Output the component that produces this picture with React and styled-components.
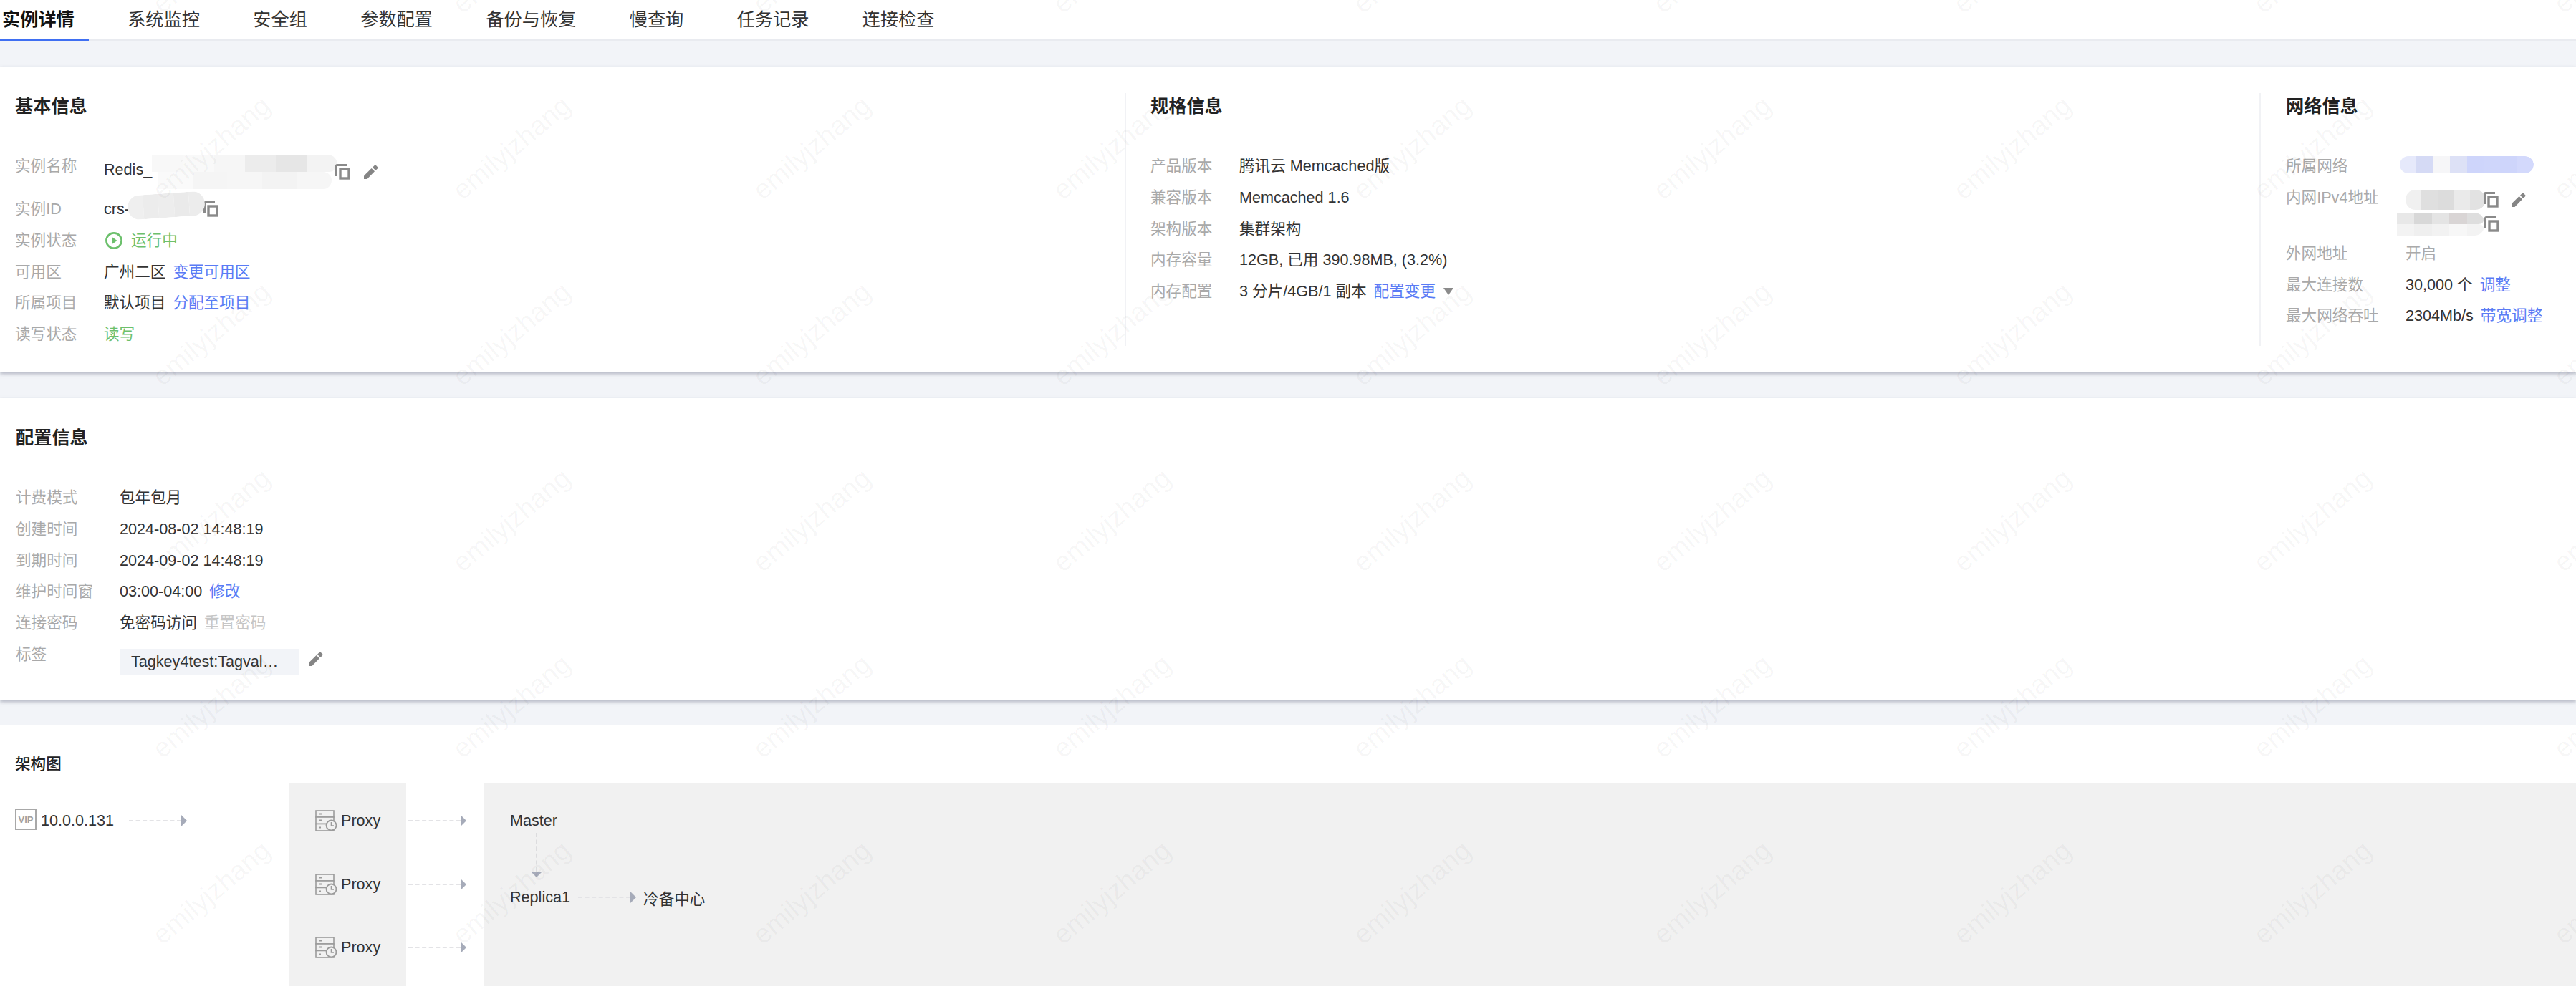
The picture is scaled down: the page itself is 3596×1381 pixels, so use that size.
import React from 'react'
import styled, { createGlobalStyle } from 'styled-components'

const GlobalStyle = createGlobalStyle`
  html, body {
    margin: 0;
    padding: 0;
    background: #f2f4f8;
  }
  body {
    font-family: "Liberation Sans", "Noto Sans CJK SC", sans-serif;
    font-size: 21.6px;
    color: #333;
  }
`

const Page = styled.div`
  position: relative;
  width: 3596px;
  height: 1381px;
  overflow: hidden;
  background: #f2f4f8;
`

const Watermark = styled.div`
  position: absolute;
  top: -184px;
  left: -333px;
  display: grid;
  grid-template-columns: repeat(10, 419px);
  grid-auto-rows: 260px;
  pointer-events: none;
  z-index: 5;

  span {
    place-self: center;
    transform: rotate(-40deg);
    font-size: 38px;
    color: rgba(0, 0, 0, 0.04);
    white-space: nowrap;
  }
`

const TabBar = styled.div`
  display: flex;
  gap: 51.4px;
  height: 57px;
  box-sizing: border-box;
  background: #fff;
  border-bottom: 2px solid #e9ebf0;
`

const Tab = styled.div`
  height: 57px;
  box-sizing: border-box;
  padding: 0 20px 0 3px;
  font-size: 25.2px;
  line-height: 54px;
  color: ${p => (p.$active ? '#111' : '#333')};
  font-weight: ${p => (p.$active ? 700 : 400)};
  border-bottom: 3px solid ${p => (p.$active ? '#3f6ff2' : 'transparent')};
`

const Panel = styled.section`
  background: #fff;
  margin-top: ${p => p.$top}px;
  padding: ${p => p.$pad};
  box-shadow: ${p => (p.$flat ? 'none' : '0 3px 5px rgba(120, 125, 145, 0.55)')};
`

const Columns = styled.div`
  display: flex;
  height: 353px;
`

const Column = styled.div`
  box-sizing: border-box;
  width: ${p => p.$width};
  flex: ${p => (p.$width ? 'none' : 1)};
  padding-left: ${p => p.$pad}px;
  border-left: ${p => (p.$line ? '2px solid #f1f2f5' : 'none')};
`

const Title = styled.h3`
  margin: 0 0 44px;
  font-size: 25.2px;
  line-height: 36px;
  font-weight: 700;
  color: #222;
`

const Row = styled.div`
  display: flex;
  align-items: flex-start;
  height: ${p => p.$height || 43.75}px;
  line-height: 43.75px;
`

const Label = styled.div`
  flex: none;
  width: ${p => p.$width}px;
  color: #a9a9a9;
  white-space: nowrap;
`

const Value = styled.div`
  display: flex;
  align-items: center;
  height: ${p => p.$height || 43.75}px;
  white-space: nowrap;
  color: ${p => (p.$muted ? '#aaa' : p.$ok ? '#6cc06c' : '#333')};
`

const RaisedText = styled.span`
  margin-bottom: 6px;
`

const Stack = styled.div`
  display: flex;
  flex-direction: column;
`

const StackLine = styled.div`
  display: flex;
  align-items: center;
  height: ${p => p.$height}px;
  padding-top: ${p => p.$top || 0}px;
  box-sizing: border-box;
  margin-left: ${p => p.$shift || 0}px;
`

const Link = styled.a`
  margin-left: 10px;
  color: #5a7bf5;
`

const Disabled = styled.span`
  margin-left: 10px;
  color: #c6c6c6;
`

const Mosaic = styled.div`
  flex: none;
  display: flex;
  flex-direction: column;
  width: ${p => p.$width}px;
  height: ${p => p.$height}px;
  margin: ${p => p.$margin || '0'};
  border-radius: ${p => p.$radius || '0 14px 14px 0'};
  overflow: hidden;
  transform: ${p => (p.$tilt ? `rotate(${p.$tilt}deg)` : 'none')};
`

const MosaicRow = styled.div`
  flex: 1;
  display: flex;
  margin-left: ${p => p.$inset || 0}px;
  margin-right: ${p => p.$inset || 0}px;
  border-radius: 0 14px 14px 0;
  overflow: hidden;
`

const MosaicCell = styled.div`
  flex: 1;
  background: ${p => p.$color};
`

const IconSvg = styled.svg`
  flex: none;
  display: block;
  margin-left: ${p => p.$left || 0}px;
  fill: ${p => p.$fill || 'none'};
`

const CopyIcon = ({ left }) => (
  <IconSvg $left={left} width="21" height="22" viewBox="0 0 21 22">
    <path d="M1.5 17V2.5a1 1 0 0 1 1-1H16" stroke="#8a8a8a" strokeWidth="3" fill="none" />
    <rect x="7" y="7" width="12" height="13" stroke="#8a8a8a" strokeWidth="3.4" fill="none" />
  </IconSvg>
)

const EditIcon = ({ left }) => (
  <IconSvg $left={left} $fill="#858585" width="22" height="22" viewBox="0 0 22 22">
    <path d="M1 16.5V21h4.5L16 10.3l-4.4-4.4L1 16.5z" />
    <path d="M17.4 9l2.9-2.9a1.2 1.2 0 0 0 0-1.7l-2.6-2.6a1.2 1.2 0 0 0-1.7 0L13 4.7 17.4 9z" />
  </IconSvg>
)

const RunningIcon = () => (
  <IconSvg $left={2} width="24" height="24" viewBox="0 0 24 24">
    <circle cx="12" cy="12" r="10.6" stroke="#6cc06c" strokeWidth="2.6" fill="none" />
    <path d="M9.5 7l7 5-7 5z" fill="#6cc06c" />
  </IconSvg>
)

const StatusText = styled.span`
  margin-left: 12px;
`

const Caret = styled.span`
  width: 0;
  height: 0;
  margin-left: 11px;
  border-left: 7px solid transparent;
  border-right: 7px solid transparent;
  border-top: 10px solid #8b8b8b;
`

const Tag = styled.div`
  box-sizing: border-box;
  width: 250px;
  height: 36px;
  margin-top: 14px;
  padding: 0 16px;
  line-height: 36px;
  background: #f2f4f8;
  color: #333;
  white-space: nowrap;
`

const TagValue = styled.div`
  display: flex;
  align-items: flex-start;
`

const TagEdit = styled.div`
  margin: 17px 0 0 13px;
`

const DiagramTitle = styled.h4`
  margin: 0;
  height: 44px;
  padding-left: 21px;
  font-size: 21.6px;
  line-height: 36px;
  font-weight: 500;
  color: #222;
`

const Diagram = styled.div`
  display: flex;
  height: 284px;
`

const Lane = styled.div`
  flex: ${p => (p.$width ? 'none' : 1)};
  width: ${p => (p.$width ? `${p.$width}px` : 'auto')};
  box-sizing: border-box;
  padding: ${p => p.$top || 9}px 0 0 ${p => p.$pad || 0}px;
  background: ${p => (p.$gray ? '#f1f1f1' : 'transparent')};
`

const LaneRow = styled.div`
  display: flex;
  align-items: center;
  height: 88.5px;
  gap: ${p => p.$gap || 0}px;
`

const VipBox = styled.span`
  flex: none;
  display: flex;
  align-items: center;
  justify-content: center;
  box-sizing: border-box;
  width: 30px;
  height: 30px;
  margin-top: -4px;
  border: 2px solid #a8a8a8;
  font-size: 13px;
  font-weight: 700;
  color: #a0a0a0;
`

const HArrow = styled.div`
  flex: none;
  display: flex;
  align-items: center;
  width: 81px;
  margin-left: ${p => p.$left || 0}px;

  &::before {
    content: '';
    flex: 1;
    border-top: 2px dashed #e3e3e6;
  }
  &::after {
    content: '';
    border-top: 8px solid transparent;
    border-bottom: 8px solid transparent;
    border-left: 8px solid #a6abb9;
  }
`

const VArrow = styled.div`
  display: flex;
  flex-direction: column;
  align-items: center;
  width: 16px;
  height: 62px;
  margin-left: 29px;

  &::before {
    content: '';
    flex: 1;
    border-left: 2px dashed #dcdcde;
  }
  &::after {
    content: '';
    border-left: 8px solid transparent;
    border-right: 8px solid transparent;
    border-top: 8px solid #a6abb9;
  }
`

const StoreName = styled.div`
  height: 34px;
  line-height: 34px;
`

const ReplicaRow = styled.div`
  display: flex;
  align-items: center;
  height: 56px;
`

const ColdStore = styled.span`
  margin-left: 10px;
`

const ProxyIcon = () => (
  <IconSvg width="30" height="30" viewBox="0 0 30 30">
    <g stroke="#9b9b9b" strokeWidth="1.6" fill="#f1f1f1">
      <rect x="1" y="1" width="25" height="9" />
      <rect x="1" y="10" width="25" height="9.5" />
      <rect x="1" y="19.5" width="25" height="9.5" />
    </g>
    <g stroke="#9b9b9b" strokeWidth="2">
      <path d="M5 5.5h5M5 14.5h5M5 24.5h3" />
    </g>
    <circle cx="22.5" cy="21.5" r="7" fill="#f1f1f1" stroke="#9b9b9b" strokeWidth="1.8" />
    <path d="M22.5 17v5h3.5" stroke="#9b9b9b" strokeWidth="1.6" fill="none" />
  </IconSvg>
)

const vpcCells = [['#e6e9fb', '#d5daf5', '#f6f6f8', '#dde1f6', '#ced5fb', '#cfd6fb', '#ced5fb', '#d3d9fc']]
const nameCells = [
  { colors: ['#f8f8f8', '#f9f9f9', '#f6f6f6', '#ececec', '#e6e6e6', '#f3f3f3'] },
  { inset: 8, colors: ['#fafafa', '#f5f5f5', '#f6f6f6', '#f3f3f3', '#f6f6f6'] },
]
const crsCells = [['#efefef', '#ececec', '#ededed', '#eaeaea', '#ececec']]
const ipCells = [['#f0f0f0', '#dfdfdf', '#dcdcdc', '#eaeaea', '#e2e2e2']]
const ip6Cells = [
  ['#e8e8e8', '#d8d8d8', '#e4e4e4', '#d9d5d5', '#dedede'],
  ['#f3f3f3', '#efefef', '#f2f2f2', '#f7f7f7', '#f3f3f3'],
]

const Blur = ({ cells, ...rest }) => (
  <Mosaic {...rest}>
    {cells.map((row, i) => {
      const colors = row.colors || row
      return (
        <MosaicRow key={i} $inset={row.inset}>
          {colors.map((c, j) => (
            <MosaicCell key={j} $color={c} />
          ))}
        </MosaicRow>
      )
    })}
  </Mosaic>
)

const tabs = ['实例详情', '系统监控', '安全组', '参数配置', '备份与恢复', '慢查询', '任务记录', '连接检查']

const BasicColumn = () => (
  <Column $width="1570px" $pad={21}>
    <Title>基本信息</Title>
    <Row $height={60}>
      <Label $width={124}>实例名称</Label>
      <Value $height={60}>
        <RaisedText>Redis_</RaisedText>
        <Blur cells={nameCells} $width={259} $height={48} />
        <CopyIcon left={-3} />
        <EditIcon left={18} />
      </Value>
    </Row>
    <Row>
      <Label $width={124}>实例ID</Label>
      <Value>
        crs-
        <Blur cells={crsCells} $width={108} $height={34} $radius="17px" $tilt={-4} $margin="0 0 10px -3px" />
        <CopyIcon left={-2} />
      </Value>
    </Row>
    <Row>
      <Label $width={124}>实例状态</Label>
      <Value $ok>
        <RunningIcon />
        <StatusText>运行中</StatusText>
      </Value>
    </Row>
    <Row>
      <Label $width={124}>可用区</Label>
      <Value>
        广州二区<Link>变更可用区</Link>
      </Value>
    </Row>
    <Row>
      <Label $width={124}>所属项目</Label>
      <Value>
        默认项目<Link>分配至项目</Link>
      </Value>
    </Row>
    <Row>
      <Label $width={124}>读写状态</Label>
      <Value $ok>读写</Value>
    </Row>
  </Column>
)

const SpecColumn = () => (
  <Column $width="1584px" $pad={34} $line>
    <Title>规格信息</Title>
    <Row>
      <Label $width={124}>产品版本</Label>
      <Value>腾讯云 Memcached版</Value>
    </Row>
    <Row>
      <Label $width={124}>兼容版本</Label>
      <Value>Memcached 1.6</Value>
    </Row>
    <Row>
      <Label $width={124}>架构版本</Label>
      <Value>集群架构</Value>
    </Row>
    <Row>
      <Label $width={124}>内存容量</Label>
      <Value>12GB, 已用 390.98MB, (3.2%)</Value>
    </Row>
    <Row>
      <Label $width={124}>内存配置</Label>
      <Value>
        3 分片/4GB/1 副本<Link>配置变更</Link>
        <Caret />
      </Value>
    </Row>
  </Column>
)

const NetworkColumn = () => (
  <Column $pad={35} $line>
    <Title>网络信息</Title>
    <Row>
      <Label $width={159}>所属网络</Label>
      <Value>
        <Blur cells={vpcCells} $width={187} $height={24} $radius="12px" $margin="-4px 0 0 0" />
      </Value>
    </Row>
    <Row $height={78}>
      <Label $width={167}>内网IPv4地址</Label>
      <Stack>
        <StackLine $height={44} $top={6}>
          <Blur cells={ipCells} $width={112} $height={28} $radius="14px" />
          <CopyIcon left={-3} />
          <EditIcon left={17} />
        </StackLine>
        <StackLine $height={30} $shift={-12}>
          <Blur cells={ip6Cells} $width={122} $height={32} />
          <CopyIcon />
        </StackLine>
      </Stack>
    </Row>
    <Row>
      <Label $width={167}>外网地址</Label>
      <Value $muted>开启</Value>
    </Row>
    <Row>
      <Label $width={167}>最大连接数</Label>
      <Value>
        30,000 个<Link>调整</Link>
      </Value>
    </Row>
    <Row>
      <Label $width={167}>最大网络吞吐</Label>
      <Value>
        2304Mb/s<Link>带宽调整</Link>
      </Value>
    </Row>
  </Column>
)

const ConfigPanel = () => (
  <Panel $top={37} $pad="37px 0 36px 22px">
    <Title>配置信息</Title>
    <Row>
      <Label $width={145}>计费模式</Label>
      <Value>包年包月</Value>
    </Row>
    <Row>
      <Label $width={145}>创建时间</Label>
      <Value>2024-08-02 14:48:19</Value>
    </Row>
    <Row>
      <Label $width={145}>到期时间</Label>
      <Value>2024-09-02 14:48:19</Value>
    </Row>
    <Row>
      <Label $width={145}>维护时间窗</Label>
      <Value>
        03:00-04:00<Link>修改</Link>
      </Value>
    </Row>
    <Row>
      <Label $width={145}>连接密码</Label>
      <Value>
        免密码访问<Disabled>重置密码</Disabled>
      </Value>
    </Row>
    <Row $height={49.25}>
      <Label $width={145}>标签</Label>
      <TagValue>
        <Tag>Tagkey4test:Tagval…</Tag>
        <TagEdit>
          <EditIcon />
        </TagEdit>
      </TagValue>
    </Row>
  </Panel>
)

const ArchPanel = () => (
  <Panel $top={36} $pad="36px 0 4px" $flat>
    <DiagramTitle>架构图</DiagramTitle>
    <Diagram>
      <Lane $width={404} $pad={21}>
        <LaneRow $gap={6}>
          <VipBox>VIP</VipBox>
          10.0.0.131
          <HArrow $left={15} />
        </LaneRow>
      </Lane>
      <Lane $width={163} $pad={36} $gray>
        {[0, 1, 2].map(i => (
          <LaneRow key={i} $gap={6}>
            <ProxyIcon />
            Proxy
          </LaneRow>
        ))}
      </Lane>
      <Lane $width={109} $pad={3}>
        {[0, 1, 2].map(i => (
          <LaneRow key={i}>
            <HArrow />
          </LaneRow>
        ))}
      </Lane>
      <Lane $pad={36} $top={36} $gray>
        <StoreName>Master</StoreName>
        <VArrow />
        <ReplicaRow>
          Replica1
          <HArrow $left={11} />
          <ColdStore>冷备中心</ColdStore>
        </ReplicaRow>
      </Lane>
    </Diagram>
  </Panel>
)

export default function App() {
  return (
    <Page>
      <GlobalStyle />
      <TabBar>
        {tabs.map((t, i) => (
          <Tab key={t} $active={i === 0}>
            {t}
          </Tab>
        ))}
      </TabBar>
      <Panel $top={36} $pad="37px 0 36px">
        <Columns>
          <BasicColumn />
          <SpecColumn />
          <NetworkColumn />
        </Columns>
      </Panel>
      <ConfigPanel />
      <ArchPanel />
      <Watermark>
        {Array.from({ length: 70 }).map((_, i) => (
          <span key={i}>emilyjzhang</span>
        ))}
      </Watermark>
    </Page>
  )
}
